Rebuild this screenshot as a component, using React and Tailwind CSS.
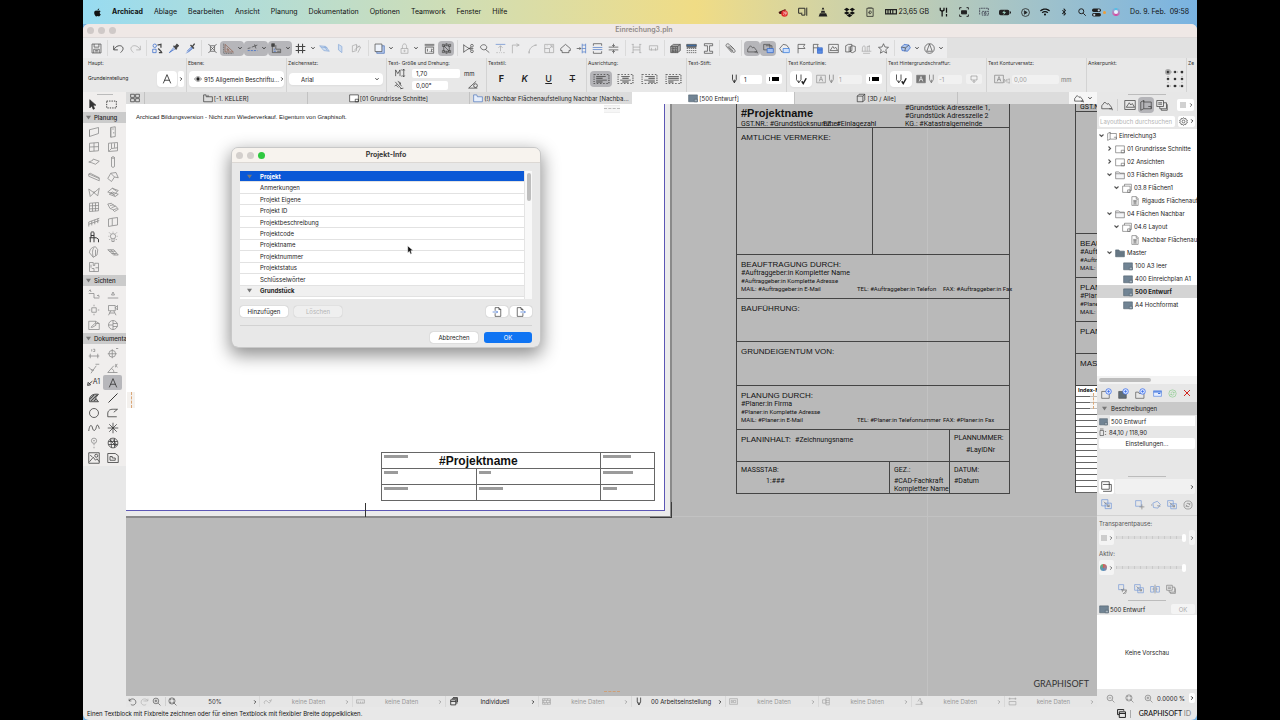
import { useState } from 'react'
import clsx from 'clsx'
import { FaApple, FaDropbox, FaBluetoothB, FaWifi } from 'react-icons/fa'

// 16x16 line drawings, stroked with the current text colour
const icons = {
  save: <><path d="M1.5 1.5h13v13h-13z" /><path d="M4.500 1.500v4.500h7V1.500M4 14.500V9h8v5.500M6 11h4M6 13h4" /></>,
  undo: <path d="M1 4v6h6M1.500 9.500C4 4 11 2 14 6c2 3-1 6-3 8" strokeWidth="1.300" />,
  redo: <path d="M15 4v6H9M14.500 9.500C12 4 5 2 2 6c-2 3 1 6 3 8" />,
  findSelect: <><circle cx="4" cy="4" r="2.500" stroke="#2b62c9" /><path d="M1 9h5v5H1z" stroke="#2b62c9" /><path d="M8 3l5-1v5M9 8l5 5M10 14h5" strokeWidth="1.800" /></>,
  dropper: <><path d="M9 6l-7 8 6-4 3-2" stroke="#2b62c9" /><path d="M8 4l5 5M10 6l3-4 2 2-4 4z" fill="currentColor" strokeWidth="1.800" /></>,
  syringe: <><path d="M10 7l-8 8M3 12l6-6 2 2-6 5" stroke="#2b62c9" /><path d="M8 3l5 5M11 5l3-4" strokeWidth="2" /></>,
  frameX: <path d="M5 4h6v8H5zM2 2l3 2M14 2l-3 2M2 14l3-2M14 14l-3-2M6 6l4 4M10 6l-4 4" />,
  setSquare: <><path d="M3 2v11h12z" stroke="#8f5f4c" /><path d="M6 8v2.500h3z" stroke="#8f5f4c" /><path d="M1 1v14h14" strokeDasharray="1.500 1" /></>,
  guide: <><path d="M1 11h14" stroke="#2b62c9" strokeDasharray="3 1.500" /><path d="M1 8l4-1M7 6l8-3M11 2l2 6" /></>,
  ruler: <><path d="M2 3v11h12V9H7V3M9 12h4" /><path d="M1 1h4v4H1z" fill="currentColor" /><path d="M4 9h2M4 12h3" stroke="#2b62c9" /></>,
  hash: <path d="M5 1v14M11 1v14M1 5h14M1 11h14" strokeWidth="1.600" />,
  plane: <><path d="M1 4l9 1 5 7-8-1z" fill="#cddcf0" stroke="#87a9d8" /><path d="M3 6l9 1M8 5l4 6" stroke="#87a9d8" /></>,
  planeV: <path d="M5 2l5 3v9l-5-4z" fill="#cddcf0" stroke="#87a9d8" />,
  planeEdit: <><path d="M2 4l6-2v9l-6 2zM8 4l6 2-4 8" /><path d="M5 10l8-6" /></>,
  layers: <><path d="M4 4h11v11H4z" fill="#b4c9ef" stroke="#4b6fb5" /><path d="M1.500 1.500h10v11h-10z" fill="#eef3fb" /></>,
  lock: <><path d="M3 8h10v7H3zM5 8V5c0-5 6-5 6 0v3" /><circle cx="8" cy="11.500" r="1" /></>,
  dim12: <><path d="M1 2h14M1 4h14M2 6h12v9H2z" /><path d="M5 8.500v4M8 12.500h.5M10 9h2l-2 3.500h2.500" /></>,
  nodes: <><path d="M4 4h8v8H4zM4 4l8 8" /><path d="M2 2h3v3H2zM11 2h3v3h-3zM2 11h3v3H2zM11 11h3v3h-3zM7 1h2v2H7zM7 13h2v2H7z" /></>,
  cut: <><path d="M1 3l11 7M1 13l11-7M8 8h7M1 2v12" /><circle cx="13" cy="4" r="2" /><circle cx="13" cy="12" r="2" /></>,
  magicCut: <path d="M2 6c1-4 7-5 9-1 1 3-1 5-4 5l-3-1zM9 9l6 5" />,
  elevate: <><path d="M1 2h14" stroke="#5d86ce" /><path d="M8 4v8M5 7l3-3 3 3M2 14h2M6 14h1M9 14h1M12 14h2" /></>,
  corner: <path d="M2 15V3h9M8 1l4 2-4 2" />,
  fillet: <path d="M3 15C3 8 7 4 14 3M3 15v-3M14 3h-3" />,
  resize: <><path d="M1 2h13v12H1z" /><path d="M1 8h7v6M8 8l4-4M9 4h3v3M4 4h1" /></>,
  house: <path d="M1 8l7-6 7 6v3h-2v3H3v-3H1z" />,
  wallIn: <><path d="M9 1v14M14 1v14M9 3h5M9 13h5M9 8h5" stroke="#4b78c8" /><path d="M1 8h6M5 6l2 2-2 2" /></>,
  split: <><path d="M1 6.500h14M1 9.500h14" stroke="#4b78c8" /><path d="M2 4V1h12v3M2 12v3h12v-3" /></>,
  squeeze: <path d="M1 6h14M1 10h14M8 1v4M6 3l2 2 2-2M8 15v-4M6 13l2-2 2 2" />,
  adjust: <path d="M3 2v12M13 2v12M3 6h10M3 10h10M1 2h3M12 2h3M1 14h3M12 14h3" />,
  clamp: <path d="M2 4h12v6H2zM5 7v4M11 7v4" />,
  solid: <><path d="M1 5l4-3h10v9l-4 3H1z" fill="#aaa" /><path d="M1 5h10v9M11 5l4-3M3 7h2v2H3zM7 7h2v2H7zM3 11h2v2H3zM7 11h2v2H7z" /></>,
  hatch: <><path d="M1 2h14v3H1z" fill="#3f6da3" /><path d="M1 8h14M1 11h14M1 14h14" strokeDasharray="2 1" /><path d="M1 6.500h14" /></>,
  beam: <path d="M2 1h12v3H9.500v8H14v3H2v-3h4.500V4H2z" />,
  clip: <path d="M4 5l7 8c2 2 5 0 3-3L6 2C4 0 0 2 2 5l8 9M5 4l7 8M8 4l5 5" />,
  roof: <path d="M1 13V9l4-5 3 3 2-1 4 5v2H1M11 13h4v2" />,
  stack: <><path d="M1 2h9v8H1zM4 4h9v8" /><path d="M6 8h9v6H6z" fill="#9dbcf0" stroke="#2b62c9" /></>,
  roofBlue: <><path d="M1 8l5-6 5 1 3 4-1 6H4z" /><path d="M6 8h9v6H6z" fill="#cfe0fb" stroke="#2b76dd" /></>,
  flag: <path d="M3 15V2h10l-2 3 2 3H3" />,
  flagBlue: <><path d="M2 15V2h7l-1 2 1 3H2" /><path d="M8 7h7v8H8zM8 10h7" fill="#5c8de2" stroke="#2b62c9" /></>,
  picture: <><path d="M1 2h14v12H1z" /><path d="M3 11l4-6 2 3 2-2 3 5z" /></>,
  cubes: <path d="M1 4l4-2h5v9l-4 2H1zM6 5v8M8 5l3-1 4 1v7l-4 2-3-1z" />,
  wells: <path d="M1 12h14M2 12V7c2-5 4-3 4 0v5M9 12V5M12 12V3M9 5h4M3 15h10" />,
  star: <path d="M8 1l2.100 4.800 5.200.5-4 3.400 1.200 5.100L8 12.100l-4.500 2.700 1.200-5.100-4-3.400 5.200-.5z" />,
  boxBlue: <><path d="M2 6l4-4 7 1 2 4-4 5-8-1z" fill="#adc6ee" stroke="#2b62c9" /><path d="M2 6l6 1 5-4M8 7l-1 5" /></>,
  ring: <><circle cx="8" cy="8" r="7" /><path d="M8 1.500L4 12h8z" /></>,
  textA: <path d="M2 15L8 1l6 14M4 10h8" strokeWidth="1.300" />,
  eye: <><path d="M1 8c4-6 10-6 14 0-4 6-10 6-14 0z" /><circle cx="8" cy="8" r="2.800" fill="currentColor" /></>,
  height: <path d="M1 13V3l3.500 6L8 3v10M10 3h2M10 13h2M14 2v12M12.500 4L14 2l1.500 2M12.500 12l1.500 2 1.500-2" />,
  rotate: <path d="M2 3l10 11M3 8l4 4M8 4l4 6M1 10l3-3M10 14l5-1M6 2l5 3-2 2" />,
  slope: <><path d="M13 2L1 13h14" /><circle cx="12" cy="9" r="3" /></>,
  alignLeft: <><path d="M1 2h14v12H1z" strokeDasharray="1.500 1.500" /><path d="M3 4.500h9M3 7h6M3 9.500h10M3 12h6" strokeWidth="1.300" /></>,
  alignCenter: <><path d="M1 2h14v12H1z" strokeDasharray="1.500 1.500" /><path d="M4 4.500h8M5 7h6M3 9.500h10M5 12h6" strokeWidth="1.300" /></>,
  alignRight: <><path d="M1 2h14v12H1z" strokeDasharray="1.500 1.500" /><path d="M4 4.500h9M7 7h6M3 9.500h10M7 12h6" strokeWidth="1.300" /></>,
  justify: <><path d="M1 2h14v12H1z" strokeDasharray="1.500 1.500" /><path d="M3 4.500h10M3 7h10M3 9.500h10M3 12h5" strokeWidth="1.300" /></>,
  pen: <path d="M4 1v8l3 5 3-5V1M7 9v5" strokeWidth="1.300" />,
  penCheck: <><path d="M2 2v7l3 4 3-4V2M5 10v3" /><path d="M9 11l2 3 4-7" strokeWidth="2" /></>,
  boxedA: <path d="M1 2h14v12H1zM5 12l3-8 3 8M6 9h4" />,
  solidA: <><path d="M1 2h14v12H1z" fill="currentColor" /><path d="M5 12l3-8 3 8M6 9h4" stroke="#fff" /></>,
  monitor: <path d="M2 2h12v8H2zM8 10v4M5 13l3 2 3-2" />,
  grid4: <path d="M1 2h6v5H1zM9 2h6v5H9zM1 9h6v5H1zM9 9h6v5H9z" />,
  story: <path d="M1 14V3h4v3h10v8zM8 6V3" />,
  sheet: <><path d="M1 3h14v11H1z" fill="#fff" /><path d="M10 10h5v4h-5z" /></>,
  sheetDark: <><path d="M1 3h14v11H1z" fill="#718494" stroke="#536470" /><path d="M10 10h5v4h-5z" fill="#a7b4bf" stroke="#536470" /></>,
  sheets: <><path d="M1 5h12v10H1zM4 5V2h11v10h-2" fill="#fff" /><path d="M9 11h4v4H9z" /></>,
  cube: <path d="M2 5l3-3h9v9l-3 3H2zM2 5h9v9M11 5l3-3" />,
  folder: <path d="M1 14V3h5l2 2h7v9zM1 6h14" fill="#f3f4f6" />,
  folderBlue: <path d="M1 14V3h5l1 3h8v8z" fill="#e6eefb" stroke="#3f6bb8" />,
  folderDark: <path d="M1 14V3h5l2 2h7v9z" fill="#667784" stroke="#526371" />,
  doc: <path d="M3 1h7l3 3v11H3zM10 1v4h3M5 7h6M5 9h6M5 11h6M5 13h6M8 7v6" />,
  book: <path d="M1 12V4l4-2v11l-4 2zM5 4h10v9H5M11 10h4v3M5 2v2" />,
  sheetsStack: <path d="M1 2h9v8H1zM5 10v3h9V5h-4M3 5h5M3 7h5M7 13v2h8V7" />,
  gear: <><circle cx="8" cy="8" r="2.500" /><path d="M8 1l1.500 2 2.500-.5.5 2.500 2.500 1-1 2 1 2-2.500 1-.5 2.500-2.500-.5L8 15l-1.500-2-2.500.5-.5-2.500L1 10l1-2-1-2 2.500-1L4 2.500l2.500.5z" /></>,
  menu: <path d="M2 4h12M2 8h12M2 12h12" />,
  arrow: <path d="M4 1v12l3-3 2 5 2-1-2-5h4z" fill="currentColor" />,
  marquee: <path d="M1 3h14v10H1z" strokeDasharray="2 1.500" strokeWidth="1.300" />,
  wall: <path d="M2 5l12-3v8L2 14zM2 5v9" />,
  door: <path d="M5 2l6-1v13l-6 1zM5 2v13M9 8v2M7 4h2" />,
  window: <path d="M2 3l12-1v11L2 14zM8 2.500v11M2 8l12-.5" />,
  opening: <path d="M2 3l12-1v11L2 14zM6 3v7l8-1M6 10l-3 3M10 3v6" />,
  slab: <path d="M1 8l5-2 1-2 8 3-5 4-5-2z" />,
  column: <path d="M6 2c0-1.300 4-1.300 4 0v12c0 1.300-4 1.300-4 0zM6 2c0 1.300 4 1.300 4 0" />,
  beamTool: <path d="M1 4l14 6v3L1 7zM1 4l2-1 12 6v1" />,
  roofTool: <path d="M1 10l4-7 7-1 3 7-5-1-4 6zM5 3l5 5" />,
  shell: <path d="M1 4l7 5 7-6-2 10-5-4-5 5zM8 9v-2" />,
  stair: <path d="M1 8l6-5 8 3-5 5zM3 11l4-3 8 3-4 3zM7 3l6 4M5 9l6 4" />,
  stairFlight: <path d="M1 4l5-1 3 3 3 1 3 4-5 3-3-3-3-1zM4 6l5-1M6 9l5-2M8 12l5-2" />,
  curtain: <path d="M2 3l12-1v11L2 14zM6 2.800v11M10 2.500v11M2 6.500l12-.5M2 10.500l12-.5" />,
  railing: <path d="M1 8l14-5M1 11l14-5M1 8v6M5 6.500v6M9 5v6M13 3.500v6" />,
  panel: <path d="M2 4l5-1v10l-5 1zM7 3l7-1v10l-7 1" />,
  chair: <path d="M4 9V2c0-1 4-1 4 0v7M2 9h9l3 2v4M3 9v6M8 9v6M4 6h4" strokeWidth="1.300" />,
  bulb: <><circle cx="8" cy="7" r="3.500" /><path d="M6.500 11v3h3v-3M8 1v1M2 7h1M13 7h1M3 2l1.500 1.500M13 2l-1.500 1.500M3 12l1.500-1.500M13 12l-1.500-1.500" /></>,
  morph: <path d="M2 9c0-5 4-8 8-8l3 4-1 7-5 3zM8 2c-3 4-2 9-1 13M10 5v8" />,
  mesh: <path d="M1 5h8l6 7H9zM3 7h8M6 10h7M5 5l6 7" />,
  zone: <path d="M2 2h5v4h2V3h5v11H2zM5 10h3v4M10 9h4M4 5v4" />,
  section: <path d="M1 6h7v6h7M1 3l2-2 1 3M12 9l2-1 1 3" />,
  elevation: <path d="M1 12h14M6 8l2-4 2 4z" />,
  interior: <path d="M5 5h6v6H5zM8 1v2M8 13v2M1 8h2M13 8h2" />,
  camera: <path d="M2 2h9v7H2zM11 5l3-3v6zM5 9l-3 6M9 9l3 6M3 12h7" />,
  worksheet: <path d="M1 14V3h9l5 3v8zM4 11l5-5 2 2-5 3zM10 3v3h5" />,
  detail: <><circle cx="8" cy="8" r="6" /><path d="M8 2v12M8 6h6M8 10h6M2 8h6" /></>,
  dimension: <path d="M1 12h14M3 9v6M13 9v6M5 3v3M7 3h2v3H7" />,
  level: <><circle cx="7" cy="9" r="4.500" /><path d="M7 3v12M1 9h12M12 2h3" /></>,
  radial: <path d="M1 7l5 5 5-7M6 12l-2 3M10 3h5M4 10l4 1" />,
  angle: <path d="M1 14h13M1 14l8-9M6 9c3 1 3 3 3 5M11 3c2 0 1 4 3 4M14 3c-2 0-4 4-2 4" />,
  fill: <><path d="M2 13C1 5 6 2 14 3l-4 5 4 5z" fill="#a6a6a6" /><path d="M3 9l5-5M4 12l8-8M8 12l3-3" /></>,
  line: <path d="M2 14L14 2" strokeWidth="1.300" />,
  circle: <circle cx="8" cy="8" r="6" />,
  polyline: <path d="M1 13V8c1-5 5-5 8-5h5L9 7M1 13h12" />,
  spline: <path d="M1 12c1-9 4-9 5-4s4 4 5-1 3-3 4 2" />,
  hotspot: <path d="M8 1v14M1 8h14M3 3l10 10M13 3L3 13" />,
  lamp: <><circle cx="8" cy="5" r="3.500" /><circle cx="8" cy="5" r=".6" /><path d="M8 9v2M8 13v2" /></>,
  globe: <><circle cx="8" cy="8" r="6.500" /><path d="M2 6h12M2 10h12M5 2l1 12M10 2v12M4 4l8 8M8 3l5 8" /></>,
  image: <><path d="M1 1h14v14H1z" /><circle cx="11" cy="5" r="2" /><path d="M2 13l5-6 3 4 2-2 3 4M3 4l3 3" /></>,
  drawing: <path d="M1 14V2h10l4 3v9zM4 11V6h3v2h4v3z" />,
  zoomIn: <><circle cx="7" cy="7" r="5" /><path d="M11 11l4 4M7 4.500v5M4.500 7h5" /></>,
  zoomOut: <><circle cx="7" cy="7" r="5" /><path d="M11 11l4 4M4.500 7h5" /></>,
  zoomFit: <><circle cx="7" cy="7" r="5.500" /><path d="M11 11l4 4M4 6V4h2M8 4h2v2M4 8v2h2M8 10h2V8" /></>,
  back: <path d="M2 3v4h4M2 7c3-6 12-4 12 2 0 5-6 7-9 4" />,
  forward: <path d="M14 3v4h-4M14 7c-3-6-12-4-12 2 0 5 6 7 9 4M6 7h5" />,
  swirl: <path d="M3 12c-3-3 2-8 5-4s5 2 6-1l-3-1M14 7l1-3" />,
  scale: <path d="M1 5h14v6H1zM4 8v3M8 8v3M12 8v3" />,
  copies: <path d="M3 5h9v9H3zM5 3h9v9M3 8h9M7 1h8v8" strokeWidth="1.400" />,
  bricks: <path d="M1 3h14v10H1zM1 6h14M1 10h14M5 3v3M10 3v3M3 6v4M8 6v4M13 6v4M5 10v3M10 10v3" />,
  frame: <path d="M1 3h14v10H1zM4 6h2v4H4zM8 6h4v4H8z" />,
  combine: <path d="M1 5h6v6H1zM7 2h6v12H7zM7 6h6M7 10h6" />,
  reno: <path d="M1 13h12L9 2 5 8M8 7l6 3M11 13v-4" />,
  width: <path d="M1 3h14M3 1v4M13 1v4M2 8h12v6H2z" />,
  importDoc: <><path d="M5 6V1h6l3 3v11H5v-5M11 1v3h3" /><path d="M1 8h8M7 6l2 2-2 2" stroke="#2b62c9" /></>,
  exportDoc: <><path d="M11 6V4L8 1H2v14h9v-5M8 1v3h3" /><path d="M7 8h8M13 6l2 2-2 2" stroke="#2b62c9" /></>,
  newSheet: <><path d="M1 5h11v10H1z" /><circle cx="11" cy="5" r="4" fill="#dbe7ff" stroke="#2b62e9" /><path d="M11 3v4M9 5h4" stroke="#2b62e9" /></>,
  newDark: <><path d="M1 5h11v10H1z" fill="#5f6d78" /><circle cx="11" cy="5" r="4" fill="#dbe7ff" stroke="#2b62e9" /><path d="M11 3v4M9 5h4" stroke="#2b62e9" /></>,
  newFolder: <><path d="M1 15V6h4l1 2h7v7z" /><circle cx="11" cy="5" r="4" fill="#dbe7ff" stroke="#2b62e9" /><path d="M11 3v4M9 5h4" stroke="#2b62e9" /></>,
  winBlue: <><path d="M1 3h14v10H1z" fill="#e4edff" stroke="#3e73dd" /><path d="M1 5h14M9 8h4" stroke="#3e73dd" strokeWidth="2" /></>,
  sync: <><circle cx="8" cy="8" r="6.500" /><path d="M5 7c2-3 4-2 6 0M11 9c-2 3-4 2-6 0M11 5v2H9M5 11V9h2" /></>,
  cross: <path d="M2 2l12 12M14 2L2 14" stroke="#d2231c" strokeWidth="2" />,
  pageSize: <><path d="M2 5h7v10H2zM2 2h7" /><path d="M13 6v1M13 12v1" strokeWidth="2.500" /></>,
  trace: <path d="M3 5h12v10H3M1 1h11v11H1z" />,
  traceAdd: <><path d="M1 1h9v9H1z" stroke="#6b92d6" /><path d="M11 7v8M7 11h8" /></>,
  traceMove: <><path d="M3 5l7-3 5 5-4 6-7-1z" stroke="#6b92d6" /><path d="M10 9l5 1M2 8H0" /></>,
  traceSwap: <><path d="M1 1h9v9H1zM6 6h9v8H6z" stroke="#6b92d6" /><path d="M4 4l8 7M12 8v3H9" /></>,
  hand: <><path d="M1 1h8v8H1z" stroke="#6b92d6" /><path d="M7 11l-2-3M7 13V8M9 11V7M11 11V8M13 11V9v4l-2 3H8z" /></>,
  traceSplit: <><path d="M1 4h5v9H1zM10 4h5v9h-5z" stroke="#6b92d6" /><path d="M8 1v14M4 8h2M10 8h2" /></>,
  windows: <path d="M1 1h11v2M4 5h11v10H4zM4 8h11M1 1v9h3" strokeWidth="1.600" />,
}

function Icon({ name, className = 'size-3' }) {
  return (
    <svg viewBox="0 0 16 16" fill="none" stroke="currentColor" className={clsx('shrink-0', className)} aria-hidden="true">
      {icons[name]}
    </svg>
  )
}

function Chevron({ dir = 'right', className = 'size-1.5' }) {
  const paths = { right: 'M3 1l4 4-4 4', down: 'M1 3l4 4 4-4' }
  return (
    <svg viewBox="0 0 10 10" fill="none" stroke="currentColor" strokeWidth="2.200" className={clsx('shrink-0', className)} aria-hidden="true">
      <path d={paths[dir]} />
    </svg>
  )
}

function Triangle() {
  return (
    <svg viewBox="0 0 8 8" className="size-[5px] shrink-0 fill-[#777]" aria-hidden="true">
      <path d="M0 1h8L4 7z" />
    </svg>
  )
}

const menus = ['Ablage', 'Bearbeiten', 'Ansicht', 'Planung', 'Dokumentation', 'Optionen', 'Teamwork', 'Fenster', 'Hilfe']

function MenuBar() {
  return (
    <header className="flex h-6 shrink-0 items-center justify-between bg-linear-to-r from-[#97dbf1] via-[#f0dc85] via-55% to-[#79b3e2] pl-2.5 pr-2 text-[7px]">
      <nav className="flex items-center gap-[11px]">
        <button aria-label="Apple"><FaApple size={9} /></button>
        <button className="-ml-px font-bold">Archicad</button>
        {menus.map((m) => <button key={m}>{m}</button>)}
      </nav>
      <div className="flex items-center gap-2.5">
        <svg viewBox="0 0 20 18" className="h-[9px] w-2.5">
          <path d="M1 8l14-6v10H3z" fill="#4a1713" />
          <circle cx="13" cy="11" r="6.500" fill="#e02b2b" />
          <path d="M10 8h3l-2 6M14 8h3l-3 3h3l-3 4" stroke="#fff" fill="none" />
        </svg>
        <svg viewBox="0 0 16 16" className="size-2.5" fill="none" stroke="#222" strokeWidth="1.500">
          <path d="M1 2h10v11H6V9M14 1v13M1 2v8h4" />
        </svg>
        <svg viewBox="0 0 16 16" className="size-2.5" fill="#222">
          <path d="M7 1h2l1 3H6zM5.500 6h5l1 3h-7zM3 10h10l2 5H1z" />
        </svg>
        <FaDropbox size={11} className="ml-1.5" />
        <svg viewBox="0 0 16 16" className="size-2.5" fill="none" stroke="#222" strokeWidth="1.200">
          <path d="M3 2h10v13H3zM5 0h6M6 9c0-4 5-3 4 0s-4 2-4 0l2-1" />
        </svg>
        <div className="flex items-center gap-px">
          <svg viewBox="0 0 20 10" className="h-1.5 w-3" fill="none" stroke="#222" strokeWidth="2">
            <path d="M1 1h18v7H1zM5 1v6M9 1v6M13 1v6" />
          </svg>
          <span>23,65 GB</span>
        </div>
        <svg viewBox="0 0 16 16" className="size-2.5" fill="none" stroke="#111" strokeWidth="2">
          <path d="M2 1v4l3 2 3-2V1M5 7v8M12 1v8M12 11v4" />
        </svg>
        <svg viewBox="0 0 16 16" className="size-2.5" fill="none" stroke="#222" strokeWidth="1.500">
          <path d="M1 4V1h3M12 1h3v3M1 12v3h3M12 15h3v-3" /><path d="M4 6h8v5H4z" fill="#222" />
        </svg>
        <svg viewBox="0 0 16 16" className="size-2.5" fill="none" stroke="#334" strokeWidth="1.200">
          <path d="M1 12V2h14v3M5 7h10v6H5z" strokeDasharray="3 1" /><circle cx="10" cy="10" r="1.500" />
        </svg>
        <svg viewBox="0 0 22 12" className="h-[7px] w-3" fill="#222">
          <rect y="1" width="19" height="10" rx="3" /><path d="M20 4h2v4h-2z" /><path d="M10 2L6 7h3l-1 4 5-6h-3z" fill="#9cb" />
        </svg>
        <svg viewBox="0 0 16 16" className="size-[9px]" fill="none" stroke="#222" strokeWidth="1.400">
          <circle cx="8" cy="8" r="7" /><path d="M6 5l5 3-5 3z" fill="#222" />
        </svg>
        <FaWifi size={10} />
        <FaBluetoothB size={8} />
        <svg viewBox="0 0 16 16" className="size-2" fill="none" stroke="#222" strokeWidth="2">
          <circle cx="6.500" cy="6.500" r="5" /><path d="M10.500 10.500l5 5" />
        </svg>
        <div className="-ml-1 flex items-center gap-0.5">
          <svg viewBox="0 0 16 16" className="size-[9px]" fill="#222">
            <rect y="1" width="16" height="6" rx="3" /><rect y="9" width="16" height="6" rx="3" />
            <circle cx="12" cy="4" r="2" fill="#bcd" /><circle cx="4" cy="12" r="2" fill="#bcd" />
          </svg>
          <span className="size-[3px] rounded-full bg-[#ee9d3a]" />
          <span className="ml-1 flex size-2 items-center justify-center rounded-full bg-conic from-[#3fc4e8] via-[#d63fa0] to-[#3fc4e8]">
            <span className="size-1 rounded-full bg-[#e8f4ff]" />
          </span>
        </div>
        <time className="whitespace-pre">Do. 9. Feb.  09:58</time>
      </div>
    </header>
  )
}

const toolGroups = [
  { width: 'w-4', items: [{ i: 'save' }] },
  { width: 'w-[33px]', items: [{ i: 'undo' }, { i: 'redo', dim: true }] },
  { width: 'w-[49px]', items: [{ i: 'findSelect' }, { i: 'dropper' }, { i: 'syringe' }] },
  {
    width: 'w-[161px]',
    items: [
      { i: 'frameX' },
      { i: 'setSquare', on: true, menu: true },
      { i: 'guide', on: true, menu: true },
      { i: 'ruler', on: true, menu: true },
      { i: 'hash', menu: true },
      { i: 'plane', dim: true },
      { i: 'planeV', dim: true },
      { i: 'planeEdit', dim: true },
    ],
  },
  { width: 'w-[83px]', items: [{ i: 'layers', menu: true }, { i: 'lock', menu: true, dim: true }, { i: 'dim12' }, { i: 'nodes', on: true }] },
  {
    width: 'w-[162px]',
    items: [
      { i: 'cut' }, { i: 'magicCut' }, { i: 'elevate', dim: true }, { i: 'corner', dim: true }, { i: 'fillet', dim: true },
      { i: 'resize', dim: true }, { i: 'house' }, { i: 'wallIn' }, { i: 'split' }, { i: 'squeeze' },
    ],
  },
  { width: 'w-[33px]', items: [{ i: 'adjust', dim: true }, { i: 'clamp', dim: true }] },
  { width: 'w-[49px]', items: [{ i: 'solid' }, { i: 'hatch' }, { i: 'beam' }] },
  { width: 'w-4', items: [{ i: 'clip' }] },
  {
    width: 'w-[147px]',
    items: [
      { i: 'roof', on: true }, { i: 'stack', on: true }, { i: 'roofBlue' }, { i: 'flag' }, { i: 'flagBlue' },
      { i: 'picture' }, { i: 'cubes' }, { i: 'wells', dim: true }, { i: 'star' },
    ],
  },
  { width: 'w-12', items: [{ i: 'boxBlue', menu: true }, { i: 'ring', menu: true }] },
]

function Toolbar() {
  return (
    <div className="flex h-5 shrink-0 items-center overflow-hidden bg-[#e1e1e1]">
      <div className="flex h-full items-center bg-[#ededee] pl-[5px] pr-0.5">
        {toolGroups.map((g, n) => (
          <div key={n} className="flex items-center">
            {n > 0 && <span className="mx-[2px] box-content h-4 w-px border-r border-[#dadada]" />}
            <div className={clsx('flex items-center justify-between', g.width)}>
              {g.items.map((t) => (
                <button
                  key={t.i}
                  aria-label={t.i}
                  className={clsx('flex h-[15px] items-center rounded-sm', t.on && 'bg-[#b6b6ba]', t.dim ? 'text-[#a4a4a4]' : 'text-[#454545]')}
                >
                  <span className="flex w-4 justify-center"><Icon name={t.i} className="size-[11px]" /></span>
                  {t.menu && <span className="flex w-2 justify-center text-[#222]"><Chevron dir="down" className="size-1" /></span>}
                </button>
              ))}
            </div>
          </div>
        ))}
      </div>
    </div>
  )
}

function InfoSection({ label, children, first }) {
  return (
    <section className={clsx('h-full shrink-0 overflow-hidden pt-px', first ? 'w-[103px] pl-[5px]' : 'w-[100px] border-l border-[#d3d3d3] pl-px')}>
      <h2 className="h-2 whitespace-nowrap text-[5px] leading-2 text-[#333]">{label}</h2>
      <div className="flex h-6 items-center">{children}</div>
    </section>
  )
}

const field = 'h-[9px] rounded-xs bg-white px-1 text-[6px] leading-none outline-none'

function InfoBar() {
  const [align, setAlign] = useState('alignLeft')
  return (
    <div className="flex h-[34px] shrink-0 overflow-hidden bg-[#e8e8e8] text-[#222]">
      <InfoSection label="Haupt:" first>
        <span className="w-[69px] text-[5px]">Grundeinstellung</span>
        <button aria-label="Textwerkzeug" className="flex h-4 w-5 items-center justify-center rounded-sm bg-white shadow-xs"><Icon name="textA" className="size-2.5" /></button>
        <button aria-label="Weitere" className="ml-px flex h-4 w-1.5 items-center justify-center rounded-xs bg-white"><Chevron className="size-1" /></button>
      </InfoSection>
      <InfoSection label="Ebene:">
        <button className="mx-px flex h-4 w-[95px] items-center gap-px whitespace-nowrap rounded-sm bg-white pl-1 text-[6px] shadow-xs">
          <Icon name="eye" className="h-2 w-2.5" />915 Allgemein Beschriftu...<Chevron className="size-1" />
        </button>
      </InfoSection>
      <InfoSection label="Zeichensatz:">
        <div className="relative mx-px w-[94px]">
          <select aria-label="Zeichensatz" className="block h-3 w-full appearance-none rounded-sm bg-white pl-3 text-[6px] shadow-xs outline-none">
            <option>Arial</option>
          </select>
          <Chevron dir="down" className="pointer-events-none absolute right-1 top-1 size-1" />
        </div>
      </InfoSection>
      <InfoSection label="Text- Größe und Drehung:">
        <div className="grid grid-cols-[20px_48px_auto] items-center gap-x-1 gap-y-0.5 text-[6px]">
          <Icon name="height" className="ml-1 h-2.5 w-4" />
          <input aria-label="Textgröße" defaultValue="1,70" className={clsx(field, 'w-12')} />
          <span>mm</span>
          <Icon name="rotate" className="ml-1.5 size-2.5" />
          <input aria-label="Textdrehung" defaultValue="0,00°" className={clsx(field, 'w-9')} />
          <Icon name="slope" className="ml-1 size-2.5" />
        </div>
      </InfoSection>
      <InfoSection label="Textstil:">
        <div className="flex w-full justify-around px-0.5 text-[9px]">
          <button className="font-bold">F</button>
          <button className="font-semibold italic">K</button>
          <button className="font-medium underline">U</button>
          <button className="font-medium line-through">T</button>
        </div>
      </InfoSection>
      <InfoSection label="Ausrichtung:">
        <div className="flex w-full gap-0.5 pl-0.5">
          {['alignLeft', 'alignCenter', 'alignRight', 'justify'].map((a) => (
            <button key={a} aria-label={a} onClick={() => setAlign(a)} className={clsx('flex h-4 w-[22px] items-center justify-center rounded-sm', align === a && 'bg-[#b4b4b8]')}>
              <svg viewBox="0 0 16 16" preserveAspectRatio="none" fill="none" stroke="#444" className="h-3 w-[17px]">{icons[a]}</svg>
            </button>
          ))}
        </div>
      </InfoSection>
      <InfoSection label="Text-Stift:">
        <div className="flex w-full items-center justify-end gap-1 pr-1">
          <span className="-mr-1"><Icon name="pen" className="size-2.5" /></span>
          <input aria-label="Text-Stift" defaultValue="1" className={clsx(field, 'w-[22px] px-0.5')} />
          <PenColor />
        </div>
      </InfoSection>
      <InfoSection label="Text Konturlinie:">
        <PenToggle />
        <span className="ml-1 flex gap-px text-[#888]"><Icon name="boxedA" className="size-2.5" /><Icon name="pen" className="size-2.5" /></span>
        <input aria-label="Konturstift" defaultValue="1" className="ml-px mr-1 h-[9px] w-6 rounded-xs bg-[#f1f1f1] px-px text-[6px] leading-none text-[#999] outline-none" />
        <PenColor />
      </InfoSection>
      <InfoSection label="Text Hintergrundschraffur:">
        <PenToggle />
        <span className="ml-1 flex gap-px text-[#777]"><Icon name="solidA" className="size-2.5" /><Icon name="pen" className="size-2.5" /></span>
        <input aria-label="Hintergrundstift" defaultValue="-1" className="ml-px mr-1 h-[9px] w-6 rounded-xs bg-[#f1f1f1] px-px text-[6px] leading-none text-[#999] outline-none" />
        <span className="flex h-2.5 w-4 items-center justify-center rounded-xs bg-[#f1f1f1] text-[#777]"><Icon name="monitor" className="size-2" /></span>
      </InfoSection>
      <InfoSection label="Text Konturversatz:">
        <span className="ml-1.5 flex items-end text-[#777]"><Icon name="boxedA" className="size-2.5" /><Icon name="height" className="size-1.5" /></span>
        <input aria-label="Konturversatz" defaultValue="0,00" className="mx-0.5 h-[9px] w-[47px] rounded-xs bg-[#f1f1f1] px-0.5 text-[6px] leading-none text-[#999] outline-none" />
        <span className="text-[6px] text-[#777]">mm</span>
      </InfoSection>
      <InfoSection label="Ankerpunkt:">
        <svg viewBox="0 0 22 20" className="ml-[76px] h-5 w-[22px]">
          <circle cx="4" cy="3" r="3" fill="#aaa" />
          {[4, 11, 18].map((x) => [3, 10, 17].map((y) => <circle key={`${x}-${y}`} cx={x} cy={y} r="1.300" fill="#333" />))}
          <path d="M4 3h14v14H4z" fill="none" stroke="#777" strokeDasharray="1 2" strokeWidth=".6" />
        </svg>
      </InfoSection>
      <InfoSection label="Ze" />
    </div>
  )
}

function PenColor() {
  return (
    <button aria-label="Stiftfarbe" className="flex h-2.5 w-4 items-center justify-center gap-0.5 rounded-xs bg-white">
      <span className="h-1 w-px bg-[#555]" />
      <span className="h-1 w-[7px] bg-black" />
    </button>
  )
}

function PenToggle() {
  return (
    <button aria-label="Stift aktivieren" className="ml-0.5 flex h-4 w-[22px] items-center justify-center rounded-sm bg-white shadow-xs">
      <Icon name="penCheck" className="size-3" />
    </button>
  )
}

const toolbox = [
  {
    title: 'Planung',
    tools: ['wall', 'door', 'window', 'opening', 'slab', 'column', 'beamTool', 'roofTool', 'shell', 'stair', 'curtain', 'stairFlight', 'railing', 'panel', 'chair', 'bulb', 'morph', 'mesh', 'zone'],
  },
  { title: 'Sichten', tools: ['section', 'elevation', 'interior', 'camera', 'worksheet', 'detail'] },
  {
    title: 'Dokumenta',
    tools: ['dimension', 'level', 'radial', 'angle', 'label', 'textA', 'fill', 'line', 'circle', 'polyline', 'spline', 'hotspot', 'lamp', 'globe', 'image', 'drawing'],
  },
]

const darkTools = ['chair', 'label', 'textA', 'fill', 'line', 'circle', 'polyline', 'spline', 'hotspot', 'globe', 'image', 'drawing']

function Toolbox() {
  return (
    <aside className="w-[43px] shrink-0 bg-[#e8e8e8]">
      <div className="bg-[#f0eeed]">
        <div className="flex h-1 items-center justify-center"><span className="h-px w-4 bg-[#bbb]" /></div>
        <div className="flex h-4 items-center gap-2 pl-1 text-[#333]">
          <Icon name="arrow" className="size-[11px]" />
          <Icon name="marquee" className="size-[11px]" />
        </div>
        {toolbox.map((s) => (
          <section key={s.title}>
            <h2 className="flex h-[11px] items-center gap-[3px] bg-[#cbcbcb] pl-[3px] text-[6px] font-medium text-[#222]"><Triangle />{s.title}</h2>
            <div className="grid w-[39px] grid-cols-2 py-px pl-px">
              {s.tools.map((t, n) => (
                <button
                  key={n}
                  aria-label={t}
                  className={clsx(
                    'flex h-[15px] items-center justify-center rounded-xs',
                    darkTools.includes(t) ? 'text-[#333]' : 'text-[#858585]',
                    t === 'textA' && 'bg-[#b7b7bb]',
                  )}
                >
                  {t === 'label' ? (
                    <span className="flex items-center text-[7px]">
                      <svg viewBox="0 0 10 10" className="size-1.5" fill="none" stroke="currentColor" strokeWidth="1.500"><path d="M9 2L3 7M1 9l1-5 4 4z" /></svg>A1
                    </span>
                  ) : (
                    <Icon name={t} className={t === 'textA' ? 'size-2.5' : 'size-3'} />
                  )}
                </button>
              ))}
            </div>
          </section>
        ))}
      </div>
    </aside>
  )
}

const tabs = [
  { icon: 'story', label: '[-1. KELLER]' },
  { icon: 'sheet', label: '[01 Grundrisse Schnitte]' },
  { icon: 'folderBlue', label: '(!) Nachbar Flächenaufstellung Nachbar [Nachba...' },
  { icon: 'sheetDark', label: '[500 Entwurf]', active: true },
  { icon: 'cube', label: '[3D / Alle]' },
]

function TabBar() {
  return (
    <div className="flex h-3 shrink-0 bg-[#dcdcdc] text-[6px] text-[#222]">
      <button aria-label="Übersicht" className="flex w-[18px] items-center justify-center"><Icon name="grid4" className="h-2.5 w-3" /></button>
      {tabs.map((t) => (
        <button
          key={t.label}
          className={clsx('flex min-w-0 flex-1 items-center justify-center gap-px whitespace-nowrap border-l', t.active ? 'border-white bg-white' : 'border-[#c2c2c2]')}
        >
          <Icon name={t.icon} className="size-2.5" />{t.label}
        </button>
      ))}
      <div className="w-28 border-l border-[#c2c2c2]" />
      <button aria-label="Ansicht" className="flex w-7 items-center justify-center gap-1 bg-[#f6f6f6]"><Icon name="roof" className="size-2.5" /><Chevron dir="down" className="size-1" /></button>
    </div>
  )
}

function Stub({ className }) {
  return <div className="border-b border-r border-[#666] p-0.5"><div className={clsx('h-[3px] bg-[#9b9b9b]', className)} /></div>
}

function Page() {
  return (
    <div className="absolute left-0 top-0 h-[414px] w-[546px] border-b-2 border-r-2 border-[#8a8a8a] bg-[#ebebeb]">
      <div className="relative h-[407px] w-[539px] border-b border-r border-[#5c57b5] bg-white">
        <p className="pl-2.5 pt-2 font-['Liberation_Sans',sans-serif] text-[6px] leading-[11px] text-[#222]">
          Archicad Bildungsversion - Nicht zum Wiederverkauf. Eigentum von Graphisoft.
        </p>
        <div className="absolute right-11 top-px h-2 w-4 border-y border-[#eee] bg-[#f6f6f6]"><div className="mt-0.5 border-t border-dashed border-[#bbb]" /></div>
        <div className="absolute left-px top-72 h-4 w-2 bg-[#f4f1ee]"><div className="ml-1 h-4 border-l border-dashed border-[#dba777]" /></div>
        <div className="absolute bottom-[9px] right-[9px] w-[274px] border-l border-t border-[#666]">
          <div className="grid h-4 grid-cols-[219px_1fr]">
            <div className="relative border-b border-r border-[#666] p-0.5">
              <div className="h-[3px] w-6 bg-[#9b9b9b]" />
              <span className="absolute left-[57px] top-0 font-['Liberation_Sans',sans-serif] text-[12px] font-bold leading-4">#Projektname</span>
            </div>
            <Stub className="w-7" />
          </div>
          <div className="grid h-8 grid-cols-[95px_124px_1fr] grid-rows-2">
            <Stub className="w-3.5" /><Stub className="w-3" /><Stub className="w-[30px]" />
            <Stub className="w-6" /><Stub className="w-6" /><Stub className="w-3.5" />
          </div>
        </div>
      </div>
      <div className="absolute -bottom-px left-[239px] h-3.5 w-px bg-[#333]" />
      <div className="absolute -bottom-0.5 -right-0.5 h-4 w-[22px] border-b border-r border-[#3c3c3c]" />
    </div>
  )
}

function Contact({ title, name, address, mail, tel, fax }) {
  return (
    <div className="h-11 border-b border-[#444] pl-1 pt-1.5 text-[6px] leading-2">
      <h3 className="font-['Liberation_Sans',sans-serif] text-[8px] leading-2">{title}</h3>
      <p className="text-[7px] leading-2">{name}</p>
      <p>{address}</p>
      <div className="grid grid-cols-[116px_86px_auto] whitespace-nowrap"><span>{mail}</span><span>{tel}</span><span>{fax}</span></div>
    </div>
  )
}

function PlanHeader() {
  return (
    <article className="absolute left-[610px] top-0 w-[274px] border-x border-[#444] font-['Roboto',sans-serif] text-[7px] leading-2 text-[#111]">
      <div className="grid h-6 grid-cols-[164px_auto] items-end whitespace-nowrap border-b border-[#444] pl-1">
        <div>
          <h2 className="font-['Liberation_Sans',sans-serif] text-[11px] font-bold leading-[14px]">#Projektname</h2>
          <p className="flex"><span className="w-[82px]">GST.NR.: #Grundstücksnummer</span><span>EZ.: #Einlagezahl</span></p>
        </div>
        <div>
          <p>#Grundstück Adresszeile 1,</p>
          <p>#Grundstück Adresszeile 2</p>
          <p>KG.: #Katastralgemeinde</p>
        </div>
      </div>
      <div className="grid h-[127px] grid-cols-2 border-b border-[#444] font-['Liberation_Sans',sans-serif]">
        <h3 className="border-r border-[#444] pl-1 pt-1.5 text-[8px] leading-2">AMTLICHE VERMERKE:</h3>
      </div>
      <Contact
        title="BEAUFTRAGUNG DURCH:"
        name="#Auftraggeber:in Kompletter Name"
        address="#Auftraggeber:in Komplette Adresse"
        mail="MAIL: #Auftraggeber:in E-Mail"
        tel="TEL: #Auftraggeber:in Telefon"
        fax="FAX: #Auftraggeber:in Fax"
      />
      <h3 className="h-[43px] border-b border-[#444] pl-1 pt-1.5 font-['Liberation_Sans',sans-serif] text-[8px] leading-2">BAUFÜHRUNG:</h3>
      <h3 className="h-11 border-b border-[#444] pl-1 pt-1.5 font-['Liberation_Sans',sans-serif] text-[8px] leading-2">GRUNDEIGENTUM VON:</h3>
      <Contact
        title="PLANUNG DURCH:"
        name="#Planer:in Firma"
        address="#Planer:in Komplette Adresse"
        mail="MAIL: #Planer:in E-Mail"
        tel="TEL: #Planer:in Telefonnummer"
        fax="FAX: #Planer:in Fax"
      />
      <div className="grid h-8 grid-cols-[213px_auto] border-b border-[#444]">
        <div className="flex gap-1 border-r border-[#444] pl-1 pt-1.5"><h3 className="font-['Liberation_Sans',sans-serif] text-[8px]">PLANINHALT:</h3><span>#Zeichnungsname</span></div>
        <div className="pl-1 pt-1"><h3>PLANNUMMER:</h3><p className="pl-3 pt-1">#LayIDNr</p></div>
      </div>
      <div className="grid h-8 grid-cols-[153px_60px_auto] whitespace-nowrap border-b border-[#444]">
        <div className="border-r border-[#444] pl-1 pt-1"><h3>MASSSTAB:</h3><p className="pl-[25px] pt-[3px]">1:###</p></div>
        <div className="border-r border-[#444] pl-1 pt-1"><h3>GEZ.:</h3><p className="pt-[3px]">#CAD-Fachkraft<br />Kompletter Name</p></div>
        <div className="pl-1 pt-1"><h3>DATUM:</h3><p className="pt-[3px]">#Datum</p></div>
      </div>
    </article>
  )
}

// neighbouring sheet, cut off by the navigator
function NextHeader() {
  return (
    <article className="absolute left-[949px] right-0 top-0 overflow-hidden whitespace-nowrap border-l border-[#444] font-['Roboto',sans-serif] text-[6px] leading-2 text-[#111]">
      <p className="h-2 border-b border-[#444] pl-1 text-[7px] leading-[6px]">GST.NR.:</p>
      <div className="h-[122px] border-b border-[#444]" />
      <Contact title="BEAUFTRAGUNG" name="#Auftraggeber" address="#Auftraggeber" mail="MAIL: #" />
      <Contact title="PLANUNG" name="#Planer:in" address="#Planer:in" mail="MAIL: #" />
      <h3 className="h-8 border-b border-[#444] pl-1 pt-1.5 font-['Liberation_Sans',sans-serif] text-[8px]">PLANINHALT:</h3>
      <h3 className="h-8 border-b border-[#444] pl-1 pt-1.5 font-['Liberation_Sans',sans-serif] text-[8px]">MASSSTAB:</h3>
      <div className="bg-white">
        <div className="h-[11px] border-b border-[#666] pl-0.5 pt-px font-bold leading-[5px]">Index-Nr.</div>
        {Array.from({ length: 16 }, (_, n) => <div key={n} className="h-1.5 border-b border-[#666]" />)}
      </div>
      <div className="absolute left-3.5 top-[289px] h-4 w-2 bg-[#f4f1ee]/60"><div className="ml-[3px] h-4 border-l border-dashed border-[#dba777]" /></div>
    </article>
  )
}

const rows = [
  { label: 'Projekt', group: true },
  { label: 'Anmerkungen' },
  { label: 'Projekt Eigene' },
  { label: 'Projekt ID' },
  { label: 'Projektbeschreibung' },
  { label: 'Projektcode' },
  { label: 'Projektname' },
  { label: 'Projektnummer' },
  { label: 'Projektstatus' },
  { label: 'Schlüsselwörter' },
  { label: 'Grundstück', group: true },
]

function ProjectInfo() {
  const [selected, setSelected] = useState('Projekt')
  const button = 'flex h-[11px] items-center justify-center rounded-[3px] bg-white shadow-[0_0_1px_rgba(0,0,0,0.4)]'
  return (
    <div role="dialog" aria-label="Projekt-Info" className="absolute left-[106px] top-11 w-[308px] rounded-md bg-[#e8e8e8] text-[6px] text-[#222] shadow-[0_6px_18px_2px_rgba(0,0,0,0.45)] outline outline-[#c8c8c8]">
      <div className="relative flex h-[15px] items-center justify-center rounded-t-md border-b border-[#dcd8d4] bg-[#f7f3ee]">
        <div className="absolute left-1 flex gap-1">
          <span className="size-[7px] rounded-full bg-[#d3cfcc]" />
          <span className="size-[7px] rounded-full bg-[#d3cfcc]" />
          <span className="size-[7px] rounded-full bg-[#2fc840]" />
        </div>
        <h2 className="text-[7px] font-bold text-[#3b3b3b]">Projekt-Info</h2>
      </div>
      <div className="px-2 pb-1 pt-2">
        <div className="flex h-32 bg-white">
          <div className="flex-1">
            <ul className="grid h-[126px] auto-rows-fr">
              {rows.map((r) => (
                <li
                  key={r.label}
                  onClick={() => setSelected(r.label)}
                  className={clsx(
                    'flex items-center border-b border-[#e2e2e2]',
                    r.group && 'font-bold',
                    selected === r.label ? 'bg-[#0a58d6] text-white' : r.group && 'bg-[#f0f0f0]',
                  )}
                >
                  <span className="w-5 pl-[7px]">{r.group && <Triangle />}</span>
                  {r.label}
                </li>
              ))}
            </ul>
          </div>
          <div className="w-2 border-l border-[#e4e4e4] bg-[#f8f8f8] pl-0.5 pt-0.5"><div className="h-7 w-1 rounded-full bg-[#bdbdbd]" /></div>
        </div>
        <div className="mt-[7px] flex gap-1.5">
          <button className={clsx(button, 'w-12')}>Hinzufügen</button>
          <button disabled className="flex h-[11px] w-12 items-center justify-center rounded-[3px] bg-[#efefef] text-[#b5b5b5] shadow-[0_0_1px_rgba(0,0,0,0.3)]">Löschen</button>
          <button aria-label="Importieren" className={clsx(button, 'ml-auto w-[22px]')}><Icon name="importDoc" className="size-2.5" /></button>
          <button aria-label="Exportieren" className={clsx(button, '-ml-1 w-[22px]')}><Icon name="exportDoc" className="size-2.5" /></button>
        </div>
        <div className="mt-2 flex justify-end gap-1.5 border-t border-[#d2d2d2] pt-1.5">
          <button className={clsx(button, 'w-12')}>Abbrechen</button>
          <button className="flex h-[11px] w-12 items-center justify-center rounded-[3px] bg-[#0f74f3] text-white">OK</button>
        </div>
      </div>
      <svg viewBox="0 0 10 14" className="absolute left-[175px] top-[97px] h-2.5 w-[7px]" aria-hidden="true">
        <path d="M1 1v10l2.500-2L5 13l2-1-1.500-4H9z" fill="#111" stroke="#fff" strokeWidth=".8" />
      </svg>
    </div>
  )
}

function Canvas() {
  return (
    <main className="relative min-h-0 flex-1 overflow-hidden bg-[#b9b9b9]">
      <div className="absolute inset-x-0 top-[412px] h-px bg-[#c2c2c2]" />
      <div className="absolute inset-y-0 left-[801px] w-px bg-[#c2c2c2]" />
      <Page />
      <PlanHeader />
      <NextHeader />
      <ProjectInfo />
      <span className="absolute bottom-1 left-[478px] w-4 border-t border-dashed border-[#cf9f77]" />
      <span className="absolute bottom-1 right-2 font-['Lato',sans-serif] text-[9px] leading-4 text-[#333]">GRAPHISOFT</span>
    </main>
  )
}

const quickOptions = [
  { icon: 'swirl', label: 'keine Daten' },
  { icon: 'scale', label: 'keine Daten' },
  { icon: 'copies', label: 'Individuell', on: true },
  { icon: 'bricks', label: 'keine Daten' },
  { icon: 'pen', label: '00 Arbeitseinstellung', on: true },
  { icon: 'frame', label: 'keine Daten' },
  { icon: 'combine', label: 'keine Daten' },
  { icon: 'reno', label: 'keine Daten' },
  { icon: 'width', label: 'keine Daten' },
]

function QuickBar() {
  return (
    <div className="flex h-[11px] shrink-0 items-center bg-[#e6e6e6] text-[6px]">
      <div className="flex h-full w-[133px] items-center gap-[3px] pl-0.5 text-[#333]">
        <Icon name="back" className="size-[9px]" />
        <span className="text-[#aaa]"><Icon name="forward" className="size-[9px]" /></span>
        <Icon name="zoomIn" className="size-[9px]" />
        <span className="ml-px flex border-l border-[#d0d0d0] pl-0.5"><Icon name="zoomFit" className="size-[9px]" /></span>
        <span className="flex-1 text-center">50%</span>
        <span className="pr-0.5"><Chevron className="size-1" /></span>
      </div>
      {quickOptions.map((q, n) => (
        <button key={n} className={clsx('flex h-full min-w-0 flex-1 items-center whitespace-nowrap border-l border-[#d8d8d8] px-[3px]', q.on ? 'text-[#222]' : 'text-[#999]')}>
          <Icon name={q.icon} className="size-[9px]" />
          <span className="flex-1 text-center">{q.label}</span>
          <Chevron className="size-1" />
        </button>
      ))}
    </div>
  )
}

const tree = [
  { label: 'Einreichung3', icon: 'book', pad: 'pl-0.5', open: true },
  { label: '01 Grundrisse Schnitte', icon: 'sheet', pad: 'pl-2.5', open: false },
  { label: '02 Ansichten', icon: 'sheet', pad: 'pl-2.5', open: false },
  { label: '03 Flächen Rigauds', icon: 'folder', pad: 'pl-2.5', open: true },
  { label: '03.8 Flächen1', icon: 'sheets', pad: 'pl-[17px]', open: true },
  { label: 'Rigauds Flächenauf', icon: 'doc', pad: 'pl-[33px]' },
  { label: '04 Flächen Nachbar', icon: 'folder', pad: 'pl-2.5', open: true },
  { label: '04.6 Layout', icon: 'sheets', pad: 'pl-[17px]', open: true },
  { label: 'Nachbar Flächenau', icon: 'doc', pad: 'pl-[33px]' },
  { label: 'Master', icon: 'folderDark', pad: 'pl-2.5', open: true },
  { label: '100 A3 leer', icon: 'sheetDark', pad: 'pl-[26px]' },
  { label: '400 Einreichplan A1', icon: 'sheetDark', pad: 'pl-[26px]' },
  { label: '500 Entwurf', icon: 'sheetDark', pad: 'pl-[26px]', selected: true },
  { label: 'A4 Hochformat', icon: 'sheetDark', pad: 'pl-[26px]' },
]

function Handle() {
  return <div className="flex h-[5px] shrink-0 items-center justify-center"><span className="h-px w-[38px] bg-[#bcbcbc]" /></div>
}

const box = 'flex items-center justify-center rounded-xs bg-[#f4f4f4]'

function TraceSlider({ label, end }) {
  return (
    <div className="mt-0.5 flex h-[15px] items-center gap-0.5">
      <button aria-label={`${label} Farbe`} className={clsx(box, 'h-[15px] w-[15px] gap-0.5')}>
        {end ? <span className="size-1.5 bg-[#ccc]" /> : <span className="size-[7px] rounded-full bg-conic from-[#d0605c] via-[#5b8fbd] to-[#6fb06a]" />}
        <Chevron className="size-1" />
      </button>
      <input
        type="range"
        aria-label={label}
        defaultValue="100"
        className="h-2 w-[70px] appearance-none bg-[repeating-linear-gradient(90deg,#c9c9c9_0_1px,#dcdcdc_1px_6px)] bg-size-[100%_3px] bg-center bg-no-repeat outline-none [&::-webkit-slider-thumb]:h-2 [&::-webkit-slider-thumb]:w-1 [&::-webkit-slider-thumb]:appearance-none [&::-webkit-slider-thumb]:rounded-xs [&::-webkit-slider-thumb]:bg-white"
      />
      {end && <button aria-label="Mehr" className={clsx(box, 'ml-auto h-[15px] w-1.5')}><Chevron className="size-1" /></button>}
    </div>
  )
}

function Navigator() {
  return (
    <aside className="flex w-[100px] shrink-0 flex-col overflow-hidden bg-[#e7e7e7] text-[6px] text-[#222]">
      <Handle />
      <div className="flex h-4 shrink-0 items-center pl-1 pr-[3px] text-[#444]">
        <Icon name="roof" />
        <span className="mx-1 h-3 w-px bg-[#d0d0d0]" />
        <span className="flex w-4 justify-center"><Icon name="picture" /></span>
        <span className="flex h-4 w-4 items-center justify-center rounded-sm bg-[#b4b4b8]"><Icon name="book" /></span>
        <span className="flex w-4 justify-center"><Icon name="sheetsStack" /></span>
        <button aria-label="Menü" className="ml-auto flex h-3 w-[17px] items-center justify-center gap-0.5 rounded-xs bg-white"><Icon name="menu" className="size-2" /><Chevron className="size-1" /></button>
      </div>
      <div className="flex h-4 shrink-0 items-center justify-between px-0.5">
        <input aria-label="Layoutbuch durchsuchen" placeholder="Layoutbuch durchsuchen" className="h-[11px] w-[76px] rounded-xs bg-white px-px text-[6px] outline-none placeholder:text-[#b4b4b4]" />
        <button aria-label="Einstellungen" className="flex h-[11px] w-[17px] items-center justify-center gap-0.5 rounded-xs bg-white"><Icon name="gear" className="size-[9px]" /><Chevron className="size-1" /></button>
      </div>
      <ul className="h-[247px] shrink-0 overflow-hidden bg-white">
        {tree.map((t) => (
          <li key={t.label} className={clsx('flex h-[13px] items-center gap-[3px] whitespace-nowrap', t.pad, t.selected && 'bg-[#d4d4d4] font-bold')}>
            {t.open !== undefined && <span className="text-[#555]"><Chevron dir={t.open ? 'down' : 'right'} className="size-[5px]" /></span>}
            <span className="flex items-center gap-0.5"><Icon name={t.icon} className="size-2.5 text-[#666]" />{t.label}</span>
          </li>
        ))}
      </ul>
      <div className="h-2 shrink-0 bg-[#f3f3f3] px-0.5 pt-[2px]"><div className="h-1 w-[52px] rounded-full bg-[#bdbdbd]" /></div>
      <div className="flex h-[18px] shrink-0 items-center justify-between pl-1 pr-1.5 text-[#555]">
        <Icon name="newSheet" className="size-[11px]" />
        <Icon name="newDark" className="size-[11px]" />
        <Icon name="newFolder" className="size-[11px]" />
        <Icon name="winBlue" className="size-[9px]" />
        <Icon name="sync" className="size-[9px] text-[#7cc87e]" />
        <Icon name="cross" className="size-2" />
      </div>
      <h2 className="flex h-[13px] shrink-0 items-center gap-1 bg-[#c9c9c9] pl-[5px]"><Triangle />Beschreibungen</h2>
      <div className="flex flex-col gap-px px-0.5 pt-px">
        <div className="flex items-center gap-0.5">
          <Icon name="sheetDark" className="size-[9px]" />
          <input aria-label="Name" defaultValue="500 Entwurf" className="h-2.5 min-w-0 flex-1 bg-white px-px text-[6px] outline-none" />
        </div>
        <div className="flex h-2.5 items-center gap-0.5"><Icon name="pageSize" className="size-2" />84,10 / 118,90</div>
        <button className="h-[11px] rounded-xs bg-white">Einstellungen...</button>
      </div>
      <div className="mt-[25px]"><Handle /></div>
      <div className="flex gap-px px-0.5">
        <button aria-label="Transparentpause" className="flex h-[15px] w-[15px] items-center justify-center rounded-xs bg-white"><Icon name="trace" className="size-[11px]" /></button>
        <button aria-label="Referenz wählen" className="flex h-[15px] flex-1 items-center justify-end rounded-xs bg-[#f1f1f1] pr-px"><Chevron className="size-1" /></button>
      </div>
      <div className="flex h-[22px] shrink-0 items-center gap-[6px] border-b border-[#d2d2d2] pl-1 text-[#777]">
        <span className="flex-1"><Icon name="traceSwap" className="size-[11px]" /></span>
        <Icon name="traceAdd" className="size-2.5" />
        <Icon name="traceMove" className="size-2.5" />
        <Icon name="traceSwap" className="size-2.5" />
        <span className="pr-1"><Icon name="sync" className="size-2.5" /></span>
      </div>
      <div className="px-0.5 pt-[3px] text-[#555]">
        <p>Transparentpause:</p>
        <TraceSlider label="Transparentpause" end />
        <p className="pt-1">Aktiv:</p>
        <TraceSlider label="Aktiv" />
      </div>
      <div className="flex h-[23px] shrink-0 items-end justify-center gap-1.5 pb-1 text-[#777]">
        <Icon name="hand" className="size-2.5" />
        <Icon name="traceSwap" className="size-2.5" />
        <Icon name="traceSplit" className="size-2.5" />
        <Icon name="sheetsStack" className="size-2.5" />
      </div>
      <Handle />
      <div className="flex h-3 shrink-0 items-center gap-px px-0.5">
        <Icon name="sheetDark" className="size-2.5" />
        <span className="flex-1">500 Entwurf</span>
        <button disabled className={clsx(box, 'h-2.5 w-6 text-[#aaa]')}>OK</button>
      </div>
      <div className="flex min-h-0 flex-1 items-center justify-center bg-white">Keine Vorschau</div>
      <div className="flex h-[18px] shrink-0 items-center justify-end gap-2.5 px-0.5 text-[#666]">
        <Icon name="zoomOut" className="size-[9px]" />
        <Icon name="zoomFit" className="size-[9px]" />
        <span className="flex items-center gap-1"><Icon name="zoomIn" className="size-[9px]" /><span className="text-[#222]">0.0000 %</span>
          <button aria-label="Zoom" className="flex h-2.5 w-1.5 items-center justify-center rounded-xs bg-white text-black"><Chevron className="size-1" /></button>
        </span>
      </div>
    </aside>
  )
}

export default function App() {
  return (
    <div className="h-screen overflow-hidden bg-black px-[83px] font-['Inter',sans-serif] leading-normal text-[#111]">
      <div className="flex h-full flex-col bg-[#79b3e2]">
        <MenuBar />
        <div className="flex min-h-0 flex-1 flex-col overflow-hidden rounded-md bg-[#e8e8e8]">
          <div className="relative flex h-3.5 shrink-0 items-center justify-center border-b border-[#dedada] bg-[#efe8e6]">
            <div className="absolute left-1 flex gap-1">
              <span className="size-[7px] rounded-full bg-[#cfc9c8]" />
              <span className="size-[7px] rounded-full bg-[#cfc9c8]" />
              <span className="size-[7px] rounded-full bg-[#cfc9c8]" />
            </div>
            <h1 className="pl-2 text-[7px] font-semibold text-[#8f8a89]">Einreichung3.pln</h1>
          </div>
          <Toolbar />
          <InfoBar />
          <div className="flex min-h-0 flex-1">
            <Toolbox />
            <div className="flex min-w-0 flex-1 flex-col">
              <TabBar />
              <Canvas />
              <QuickBar />
            </div>
            <Navigator />
          </div>
          <footer className="flex h-[13px] shrink-0 items-center justify-between pl-1 pr-1.5 text-[6px]">
            <span>Einen Textblock mit Fixbreite zeichnen oder für einen Textblock mit flexibler Breite doppelklicken.</span>
            <span className="flex items-center gap-1 font-['Lato',sans-serif] text-[7px]">
              <Icon name="windows" className="size-[9px]" />
              <span className="h-2 w-px bg-[#aaa]" />
              <span className="pl-1 font-medium">GRAPHISOFT <span className="text-[#888]">ID</span></span>
            </span>
          </footer>
        </div>
      </div>
    </div>
  )
}
